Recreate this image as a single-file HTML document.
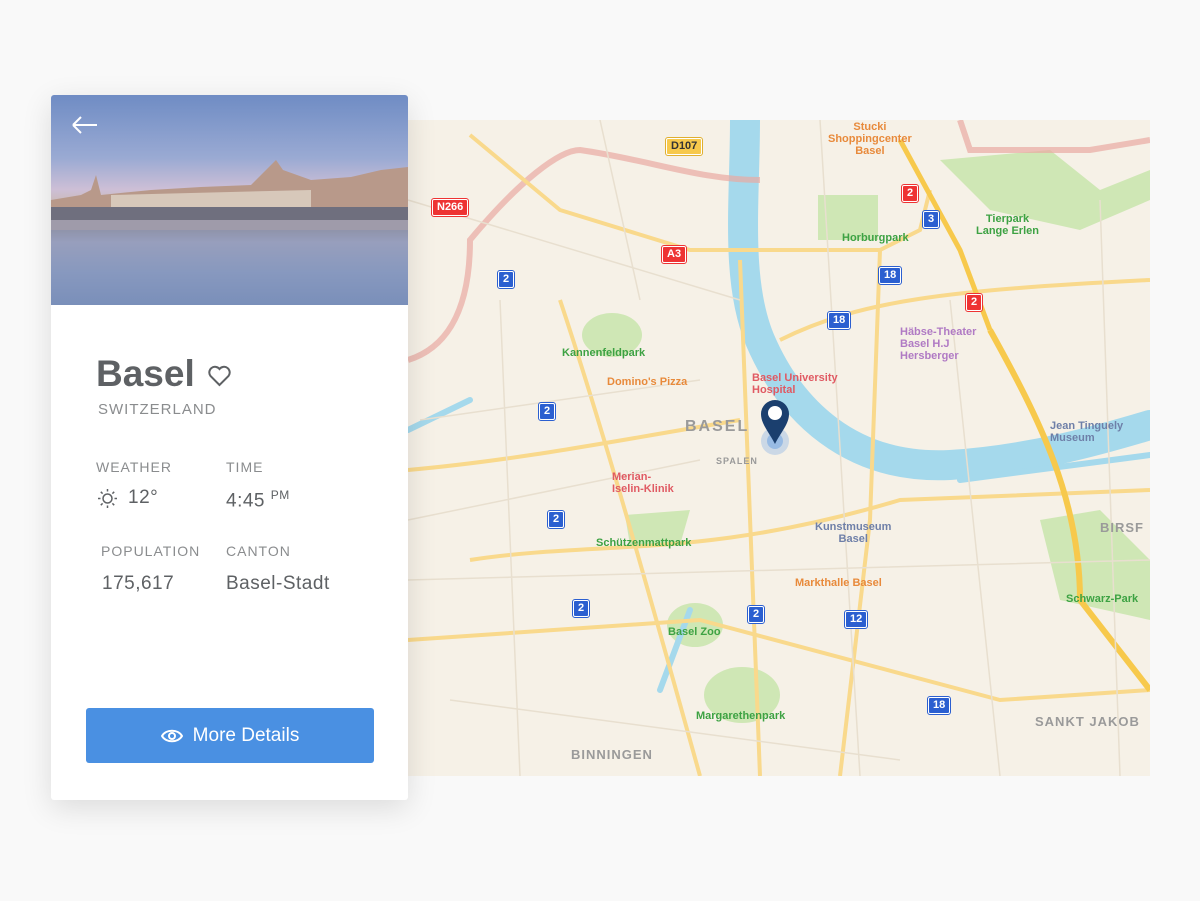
<!DOCTYPE html>
<html><head><meta charset="utf-8"><style>
body{margin:0;width:1200px;height:901px;background:#f9f9f9;font-family:"Liberation Sans",sans-serif;position:relative;overflow:hidden}
.map{position:absolute;left:400px;top:120px;width:750px;height:656px;background:#f6f1e7;overflow:hidden}
.card{position:absolute;left:51px;top:95px;width:357px;height:705px;background:#fff;border-radius:3px;box-shadow:0 8px 30px rgba(0,0,0,.12);overflow:hidden;z-index:2}
.img{position:absolute;left:0;top:0;width:357px;height:210px;background:linear-gradient(180deg,#6f8cc4 0%,#9aaad3 30%,#cdbfd6 45%,#c9b7a8 55%,#8a7a79 62%,#a7a2b8 70%,#7d92bd 85%,#5d7bb0 100%)}
.lbl{position:absolute;font-size:14px;letter-spacing:1px;color:#8a8c8e}
.val{position:absolute;font-size:19px;color:#5e6164;letter-spacing:.5px}
.btn{position:absolute;left:35px;top:613px;width:288px;height:55px;background:#4a90e2;border-radius:3px;color:#fff;font-size:19px;display:flex;align-items:center;justify-content:center;gap:10px}
.t{position:absolute;font-size:11px;font-weight:bold;line-height:12px}
.b{position:absolute;font-size:11px;font-weight:bold;color:#fff;background:#2b5fd0;padding:1px 4px;border-radius:2px;line-height:13px;border:1px solid #fff;outline:1px solid #2b5fd0}
.r{background:#e33;outline-color:#e33}
</style></head><body>
<div class="map">
<svg width="750" height="656" viewBox="400 120 750 656">
<g fill="#cfe7b5"><ellipse cx="612" cy="335" rx="30" ry="22"/><rect x="818" y="195" width="60" height="45"/><path d="M940 160 L1050 150 L1100 190 L1150 170 L1150 200 L1080 230 L990 210Z"/><path d="M625 515 L690 510 L680 545 L630 545Z"/><ellipse cx="695" cy="625" rx="28" ry="22"/><ellipse cx="742" cy="695" rx="38" ry="28"/><path d="M1040 520 L1100 510 L1150 560 L1150 620 L1060 600Z"/></g>
<g fill="none" stroke="#a5d9ec" stroke-linecap="round">
<path d="M745 120 C745 200 735 280 760 340 C790 410 850 470 950 465 C1030 460 1100 440 1150 425" stroke-width="30"/>
<path d="M660 690 L690 610 M960 480 L1150 455 M408 430 L470 400" stroke-width="6"/>
</g>
<g fill="none" stroke="#e9a9a2" stroke-width="6" opacity=".7"><path d="M408 360 C440 350 470 320 470 240 C520 180 560 150 580 150 C650 160 700 180 760 180 M960 120 L970 150 L1090 150 L1150 140"/></g>
<g fill="none" stroke="#f9d98c" stroke-width="4">
<path d="M470 135 L560 210 L690 250 L880 250 L920 230 L930 190"/>
<path d="M408 470 C520 460 620 440 740 420"/><path d="M560 300 C600 420 640 560 700 776"/>
<path d="M780 340 C860 300 950 290 1150 280"/><path d="M470 560 C600 540 700 560 900 500 L1150 490"/>
<path d="M740 260 L760 776"/><path d="M880 250 L870 520 L840 776"/><path d="M408 640 L700 620 L1000 700 L1150 690"/>
<path d="M990 330 C1040 420 1080 500 1080 600 L1150 690" stroke="#f7c94c" stroke-width="6"/>
<path d="M900 140 L960 250 L990 330" stroke="#f7c94c" stroke-width="5"/>
</g>
<g fill="none" stroke="#e8dfcf" stroke-width="1.5"><path d="M408 200 L740 300 M420 420 L700 380 M450 700 L900 760 M600 120 L640 300 M820 120 L860 776 M950 300 L1000 776 M408 580 L1150 560 M500 300 L520 776 M1100 200 L1120 776 M408 520 L700 460"/></g>
</svg>
<svg style="position:absolute;left:355px;top:278px" width="40" height="62" viewBox="0 0 40 62"><circle cx="20" cy="43" r="14" fill="#4a90e2" opacity=".25"/><circle cx="20" cy="43" r="8" fill="#4a90e2" opacity=".4"/><path d="M20 46 C14 34 6 26 6 16 A14 14 0 0 1 34 16 C34 26 26 34 20 46Z" fill="#1b3f6e"/><circle cx="20" cy="15" r="7" fill="#fff"/></svg>
</div>
<div class="t" style="left:562px;top:347px;color:#3da243">Kannenfeldpark</div>
<div class="t" style="left:607px;top:376px;color:#e88a3b">Domino's Pizza</div>
<div class="t" style="left:752px;top:372px;color:#e05a63">Basel University<br>Hospital</div>
<div class="t" style="left:685px;top:419px;color:#9a9a9a;font-size:16px;line-height:16px;letter-spacing:2px">BASEL</div>
<div class="t" style="left:716px;top:455px;color:#9a9a9a;font-size:9px;letter-spacing:1px">SPALEN</div>
<div class="t" style="left:612px;top:471px;color:#e05a63">Merian-<br>Iselin-Klinik</div>
<div class="t" style="left:596px;top:537px;color:#3da243">Schützenmattpark</div>
<div class="t" style="left:815px;top:521px;color:#6e7fa8;text-align:center">Kunstmuseum<br>Basel</div>
<div class="t" style="left:795px;top:577px;color:#e88a3b">Markthalle Basel</div>
<div class="t" style="left:668px;top:626px;color:#3da243">Basel Zoo</div>
<div class="t" style="left:696px;top:710px;color:#3da243">Margarethenpark</div>
<div class="t" style="left:842px;top:232px;color:#3da243">Horburgpark</div>
<div class="t" style="left:976px;top:213px;color:#3da243;text-align:center">Tierpark<br>Lange Erlen</div>
<div class="t" style="left:900px;top:326px;color:#b07ac4">Häbse-Theater<br>Basel H.J<br>Hersberger</div>
<div class="t" style="left:1050px;top:420px;color:#6e7fa8">Jean Tinguely<br>Museum</div>
<div class="t" style="left:1066px;top:593px;color:#3da243">Schwarz-Park</div>
<div class="t" style="left:828px;top:121px;color:#e88a3b;text-align:center">Stucki<br>Shoppingcenter<br>Basel</div>
<div class="t" style="left:571px;top:749px;color:#9a9a9a;font-size:13px;letter-spacing:1px">BINNINGEN</div>
<div class="t" style="left:1035px;top:716px;color:#9a9a9a;font-size:13px;letter-spacing:1px">SANKT JAKOB</div>
<div class="t" style="left:1100px;top:522px;color:#9a9a9a;font-size:13px;letter-spacing:1px">BIRSF</div>
<div class="b" style="left:666px;top:138px;background:#f7c94c;outline-color:#e0b030;color:#333">D107</div>
<div class="b r" style="left:432px;top:199px">N266</div>
<div class="b r" style="left:662px;top:246px">A3</div>
<div class="b r" style="left:902px;top:185px">2</div>
<div class="b r" style="left:966px;top:294px">2</div>
<div class="b" style="left:498px;top:271px">2</div>
<div class="b" style="left:539px;top:403px">2</div>
<div class="b" style="left:548px;top:511px">2</div>
<div class="b" style="left:573px;top:600px">2</div>
<div class="b" style="left:748px;top:606px">2</div>
<div class="b" style="left:879px;top:267px">18</div>
<div class="b" style="left:828px;top:312px">18</div>
<div class="b" style="left:928px;top:697px">18</div>
<div class="b" style="left:845px;top:611px">12</div>
<div class="b" style="left:923px;top:211px">3</div>
<div class="card">
<div class="img">
<svg width="357" height="210" viewBox="0 0 357 210"><path d="M0 105 L30 100 L40 95 L45 80 L50 100 L100 95 L150 92 L200 90 L215 75 L225 65 L232 75 L260 85 L300 82 L330 75 L357 72 L357 135 L0 135Z" fill="#b8998a"/><path d="M60 100 L260 95 L260 118 L60 118Z" fill="#e4dccf" opacity=".7"/><path d="M0 112 L357 112 L357 125 L0 125Z" fill="#6f6f7e"/><path d="M0 125 L357 125 L357 210 L0 210Z" fill="#8d9cc0" opacity=".6"/><path d="M22 30 L46 30 M22 30 L30 22 M22 30 L30 38" stroke="#fff" stroke-width="2" fill="none"/></svg>
</div>
<div style="position:absolute;left:45px;top:258px;font-size:37px;font-weight:bold;color:#5e6164">Basel</div>
<svg style="position:absolute;left:156px;top:270px" width="25" height="22" viewBox="0 0 24 22"><path d="M12 20 L3 11 A5 5 0 0 1 12 4 A5 5 0 0 1 21 11Z" fill="none" stroke="#5e6164" stroke-width="2"/></svg>
<div class="lbl" style="left:47px;top:306px;font-size:15px">SWITZERLAND</div>
<div class="lbl" style="left:45px;top:364px">WEATHER</div>
<div class="lbl" style="left:175px;top:364px">TIME</div>
<svg style="position:absolute;left:46px;top:393px" width="21" height="21" viewBox="0 0 21 21" stroke="#5e6164" stroke-width="1.5" fill="none"><circle cx="10.5" cy="10.5" r="4.5"/><path d="M10.5 1v2.5M10.5 17.5V20M1 10.5h2.5M17.5 10.5H20M3.8 3.8l1.8 1.8M15.4 15.4l1.8 1.8M3.8 17.2l1.8-1.8M15.4 5.6l1.8-1.8"/></svg>
<div class="val" style="left:77px;top:392px">12°</div>
<div class="val" style="left:175px;top:393px">4:45 <sup style="font-size:12px">PM</sup></div>
<div class="lbl" style="left:50px;top:448px">POPULATION</div>
<div class="lbl" style="left:175px;top:448px">CANTON</div>
<div class="val" style="left:51px;top:478px">175,617</div>
<div class="val" style="left:175px;top:478px">Basel-Stadt</div>
<div class="btn"><svg width="22" height="16" viewBox="0 0 22 16" fill="none" stroke="#fff" stroke-width="2"><path d="M1 8 C5 1 17 1 21 8 C17 15 5 15 1 8Z"/><circle cx="11" cy="8" r="3"/></svg>More Details</div>
</div>
</body></html>
